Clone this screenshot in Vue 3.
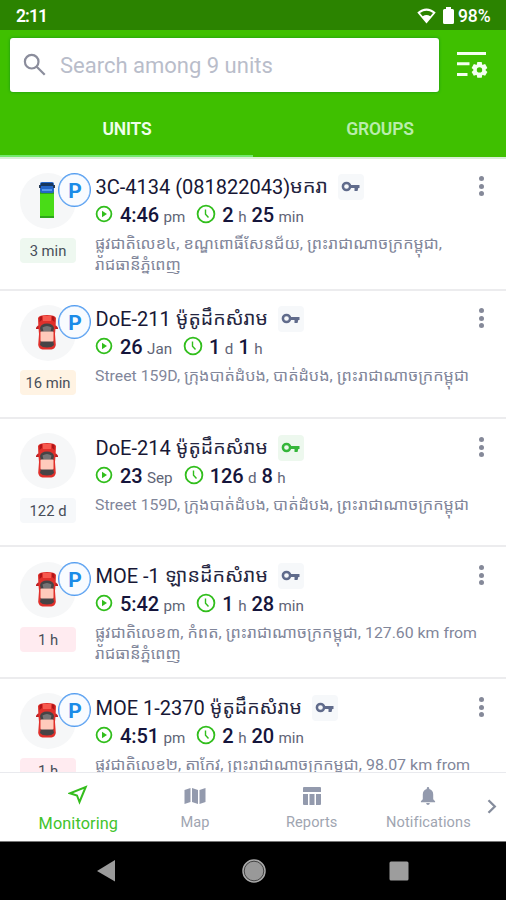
<script setup>
const units = [
  { id: 1, latin: '3C-4134 (081822043)', khmer: 'មករា', kw: 38, key: 'off', parked: true, truck: true, age: '3 min', tone: 'ok', tall: true,
    start: ['4:46', 'pm'], span: [['2', 'h'], ['25', 'min']],
    address: [[['ផ្លូវជាតិលេខ៤, ខណ្ឌពោធិ៍សែនជ័យ, ព្រះរាជាណាចក្រកម្ពុជា,', 347]], [['រាជធានីភ្នំពេញ', 86]]] },
  { id: 2, latin: 'DoE-211 ', khmer: 'ម៉ូតូដឹកសំរាម', kw: 92, key: 'off', parked: true, age: '16 min', tone: 'warn',
    start: ['26', 'Jan'], span: [['1', 'd'], ['1', 'h']],
    address: [[['Street 159D,', 85], ['ក្រុងបាត់ដំបង, បាត់ដំបង, ព្រះរាជាណាចក្រកម្ពុជា', 285]]] },
  { id: 3, latin: 'DoE-214 ', khmer: 'ម៉ូតូដឹកសំរាម', kw: 92, key: 'on', age: '122 d', tone: 'idle',
    start: ['23', 'Sep'], span: [['126', 'd'], ['8', 'h']],
    address: [[['Street 159D,', 85], ['ក្រុងបាត់ដំបង, បាត់ដំបង, ព្រះរាជាណាចក្រកម្ពុជា', 285]]] },
  { id: 4, latin: 'MOE -1 ', khmer: 'ឡានដឹកសំរាម', kw: 103, key: 'off', parked: true, age: '1 h', tone: 'late', tall: true,
    start: ['5:42', 'pm'], span: [['1', 'h'], ['28', 'min']],
    address: [[['ផ្លូវជាតិលេខ៣, កំពត, ព្រះរាជាណាចក្រកម្ពុជា,', 266], ['127.60 km from', 112]], [['រាជធានីភ្នំពេញ', 86]]] },
  { id: 5, latin: 'MOE 1-2370 ', khmer: 'ម៉ូតូដឹកសំរាម', kw: 92, key: 'off', parked: true, age: '1 h', tone: 'late', tall: true,
    start: ['4:51', 'pm'], span: [['2', 'h'], ['20', 'min']],
    address: [[['ផ្លូវជាតិលេខ២, តាកែវ, ព្រះរាជាណាចក្រកម្ពុជា,', 267], ['98.07 km from', 104]], [['រាជធានីភ្នំពេញ', 86]]] },
]
</script>

<template>
  <div class="screen">
    <header class="status">
      <span class="clock">2:11</span>
      <svg class="wifi" width="19" height="16" viewBox="0 0 19 16"><path fill="#fff" fill-rule="evenodd" d="M0.3 4.4Q9.500-3.200 18.700 4.400L9.500 15.600ZM3 5.100L5.700 8.200Q9.500 5.700 13.300 8.200L16 5.100Q9.500.400 3 5.100Z" /></svg>
      <svg class="battery" width="11" height="17" viewBox="0 0 11 17"><path fill="#fff" d="M3 0h5v2h1.500Q11 2 11 3.500v12Q11 17 9.500 17h-8Q0 17 0 15.500v-12Q0 2 1.500 2H3Z" /></svg>
      <span class="percent">98%</span>
    </header>

    <section class="top">
      <div class="tools">
        <div class="search">
          <svg width="24" height="24" viewBox="0 0 24 24" fill="none" stroke="#8b8d9c" stroke-width="2.200"><circle cx="8.700" cy="8.700" r="6.800" /><path d="m13.700 13.700 8 8" /></svg>
          <span>Search among 9 units</span>
        </div>
        <svg class="filter" width="32" height="28" viewBox="0 0 32 28">
          <path d="M1 2.500h29M1 12.700h12.500M1 23.600h10.500" stroke="#f4fff0" stroke-width="3" />
          <g transform="translate(23.500 18.900)" fill="#f4fff0">
            <path v-for="a in 6" :key="a" d="M-2.200-7.800h4.400l.8 3.800h-6z" :transform="`rotate(${a * 60})`" />
            <circle r="4.300" fill="none" stroke="#f4fff0" stroke-width="3.200" />
          </g>
        </svg>
      </div>
      <nav class="tabs">
        <div class="tab active">UNITS</div>
        <div class="tab">GROUPS</div>
      </nav>
    </section>

    <main class="list">
      <article v-for="u in units" :key="u.id" class="unit" :class="{ tall: u.tall }">
        <div class="side">
          <div class="avatar">
            <svg v-if="u.truck" width="16" height="38" viewBox="0 0 16 38">
              <rect x="1" y="10" width="14" height="27" fill="#49dc17" />
              <path d="M1 10h14v3H1zM1 35h14v2H1z" fill="#2da51a" />
              <rect x="1" y="1" width="14" height="11" rx="2" fill="#2466c8" />
              <path d="M2 2h12v3H2z" fill="#17375f" /><path d="M0 4h2v3H0zM14 4h2v3h-2z" fill="#263a55" />
              <path d="M3 8h10v2H3z" fill="#5398ee" />
            </svg>
            <svg v-else width="22" height="37" viewBox="0 0 22 37">
              <path d="M0 13.500 2 11.500h18l2 2v1.500H0Z" fill="#bb1d20" />
              <path d="M2 4Q3 1 11 1t9 3l-.4 9-.6 7 .8 11q-.8 4-4.300 4.500h-9q-3.500-.5-4.300-4.500L3 20l-.6-7Z" fill="#e0302b" />
              <path d="M3.500 3 6 2v4L3.500 8ZM18.500 3 16 2v4l2.500 2Z" fill="#ad1519" />
              <path d="M4 14q1-4.500 7-4.500t7 4.500l-1 5v7l1 5q-2 2.500-7 2.500T4 31l1-5v-7Z" fill="#464446" />
              <path d="M6.500 13.500q4.500-3 9 0l-1 4h-7Z" fill="#777475" />
              <rect x="4.500" y="17.500" width="13" height="10" rx="1" fill="#ffcabb" />
              <path d="M7 2h8v5H7Z" fill="#f7584e" />
            </svg>
          </div>
          <div v-if="u.parked" class="parking">P</div>
          <div class="age" :class="u.tone">{{ u.age }}</div>
        </div>

        <div class="body">
          <div class="title">
            <span class="latin">{{ u.latin }}</span>
            <svg class="run" :width="u.kw" height="28"><text x="0" y="20" :textLength="u.kw" lengthAdjust="spacingAndGlyphs">{{ u.khmer }}</text></svg>
            <span class="key" :class="u.key">
              <svg width="20" height="12" viewBox="0 0 20 12"><circle cx="5.500" cy="5.500" r="3.600" fill="none" stroke="currentColor" stroke-width="2.500" /><path d="M9 4h9.500v3h-1.200L16.500 10h-3V7H9Z" fill="currentColor" /></svg>
            </span>
          </div>
          <div class="times">
            <svg class="play" width="18" height="18" viewBox="0 0 18 18"><circle cx="9" cy="9" r="7.400" fill="none" stroke="#31be1c" stroke-width="1.800" /><path d="m7 5.700 5 3.300-5 3.300Z" fill="#31be1c" /></svg>
            <b>{{ u.start[0] }}</b><small>{{ u.start[1] }}</small>
            <svg class="dur" width="20" height="20" viewBox="0 0 20 20" fill="none" stroke="#31be1c"><circle cx="10" cy="10" r="8.400" stroke-width="1.800" /><path d="M9.500 5.500v4.700l3 3.300" stroke-width="1.400" /></svg>
            <template v-for="(s, i) in u.span" :key="i"><b>{{ s[0] }}</b><small>{{ s[1] }}</small></template>
          </div>
          <div v-for="(line, i) in u.address" :key="i" class="address">
            <svg v-for="(r, j) in line" :key="j" class="run" :width="r[1]" height="21"><text x="0" y="15" :textLength="r[1]" lengthAdjust="spacingAndGlyphs">{{ r[0] }}</text></svg>
          </div>
        </div>
        <div class="more"><i></i><i></i><i></i></div>
      </article>
    </main>

    <nav class="bottom">
      <div class="item on"><svg width="20" height="20" viewBox="0 0 20 20"><path d="M17.700 2 11.500 17 9 10.500 2 8.300Z" fill="none" stroke="#34bd1d" stroke-width="2" /></svg><span>Monitoring</span></div>
      <div class="item"><svg width="22" height="18" viewBox="0 0 22 18"><path d="M.5 3 6.500 1v14l-6 2ZM8 1l6 2v14l-6-2ZM15.500 3l6-2v14l-6 2Z" fill="#939aad" /></svg><span>Map</span></div>
      <div class="item"><svg width="18" height="18" viewBox="0 0 18 18"><path d="M1 0h16q1 0 1 1v4H0V1q0-1 1-1ZM0 7h5v11H1q-1 0-1-1ZM6.500 7h5v11h-5ZM13 7h5v10q0 1-1 1h-4Z" fill="#939aad" /></svg><span>Reports</span></div>
      <div class="item"><svg width="16" height="19" viewBox="0 0 16 19"><path d="M6.700 2.200V1.300a1.300 1.300 0 0 1 2.600 0v.9Q13.500 3.500 13.500 8v5l2 2v1H.5v-1l2-2V8q0-4.500 4.200-5.800ZM6 17h4q-.4 2-2 2t-2-2Z" fill="#939aad" /></svg><span>Notifications</span></div>
      <svg class="next" width="10" height="15" viewBox="0 0 10 15"><path d="m1.500 1.200 6.300 6.300-6.300 6.300" fill="none" stroke="#858c9c" stroke-width="2.300" /></svg>
    </nav>

    <footer class="system">
      <svg width="18" height="22" viewBox="0 0 18 22"><path d="M18 0v21.500L0 11Z" fill="#9b9b9b" /></svg>
      <svg class="home" width="24" height="24" viewBox="0 0 24 24"><circle cx="12" cy="12" r="11" fill="#999" stroke="#aaa" stroke-width="1.500" /><circle cx="12" cy="12" r="9.800" fill="none" stroke="#444" stroke-width="1" /></svg>
      <svg width="20" height="20" viewBox="0 0 20 20"><rect x=".5" y=".5" width="19" height="19" rx="1.500" fill="#9d9d9d" /></svg>
    </footer>
  </div>
</template>

<style>
body { overflow: hidden; }
</style>
<style scoped>
* { box-sizing: border-box; }
.screen { width: 506px; height: 900px; display: flex; flex-direction: column; background: #fff; font-family: Roboto, "Noto Sans", "Noto Sans Khmer", sans-serif; overflow: hidden; }
svg { display: block; flex: none; }
.status { height: 30px; flex: none; background: #2b8300; color: #fff; display: flex; align-items: center; padding: 1px 15px 0 16px; font-size: 17px; font-weight: 500; }
.clock { flex: 1; letter-spacing: -.9px; font-size: 17.500px; font-weight: 600; }
.battery { margin: 0 4px 0 7px; }
.percent { width: 33px; font-size: 17.500px; letter-spacing: -.1px; }
.top { height: 129px; flex: none; background: #3fc000; border-bottom: 2px solid #d9eed6; display: flex; flex-direction: column; }
.tools { display: flex; align-items: center; padding: 8px 18px 0 10px; justify-content: space-between; }
.search { width: 429px; height: 54px; background: #fff; border-radius: 3px; display: flex; align-items: center; padding-left: 13px; gap: 13px; color: #b9bdca; font-size: 22px; box-shadow: 0 0 3px #15901c; }
.tabs { flex: 1; display: flex; }
.tab { flex: 1; display: flex; align-items: center; justify-content: center; font-size: 17.500px; font-weight: 600; letter-spacing: -.2px; color: #b9edac; padding: 9px 0 0 1px; }
.tab.active { color: #efffeb; border-bottom: 2px solid #72e96c; padding-top: 11px; }
.list { flex: 1; min-height: 0; overflow: hidden; }
.unit { height: 128px; display: flex; padding: 14px 0 0 20px; border-bottom: 2px solid #ececee; }
.unit.tall { height: 132px; }
.unit:nth-child(n+3) .body, .unit:nth-child(n+3) .more { position: relative; top: 1px; }
.side { width: 75px; flex: none; position: relative; display: flex; flex-direction: column; gap: 9px; }
.unit:nth-child(4) .side { padding-top: 1px; }
.avatar { width: 56px; height: 56px; border-radius: 50%; background: #f6f7f8; display: flex; align-items: center; justify-content: center; padding: 0 2px 2px 0; }
.parking { position: absolute; left: 38px; top: 0; width: 33px; height: 34px; border-radius: 50%; background: #f8fbff; border: 1px solid #529cf0; box-shadow: inset 0 0 0 .5px #78b4f5; display: flex; align-items: center; justify-content: center; padding: 2px 0 0 1px; color: #1b8be8; font-size: 21px; line-height: 1; font-weight: 700; }
.unit:nth-child(4) .parking { top: 1px; }
.age { width: 56px; height: 25px; border-radius: 4px; display: flex; align-items: center; justify-content: center; font-size: 14.800px; color: #484e59; }
.age.ok { background: #eef8f0; }
.age.warn { background: #fff3e3; }
.age.idle { background: #f6f8fa; }
.age.late { background: #ffebf0; }
.body { flex: 1; min-width: 0; }
.title { height: 28px; display: flex; align-items: center; color: #171735; font-size: 20px; padding-left: .5px; }
.latin { white-space: pre; }
.title text { font-size: 19px; fill: #242540; }
.key { width: 26px; height: 26px; border-radius: 4px; margin-left: 10px; background: #f6f8fa; color: #606b8b; display: flex; align-items: center; justify-content: center; }
.key.on { background: #edf8ee; color: #35b63a; }
.times { height: 28px; display: flex; align-items: baseline; line-height: 28px; color: #15153b; }
.times svg { align-self: center; }
.times b { font-size: 20px; font-weight: 500; letter-spacing: -.1px; }
.times small { font-size: 15.200px; color: #606476; margin: 0 5px 0 4.500px; }
.play { margin: 0 7px 2px 0; }
.dur { margin: 0 6px 2px 6px; }
.address { height: 21px; display: flex; gap: 4px; }
.times + .address { margin-top: 5px; }
.address text { font-size: 15.500px; fill: #81869a; }
.run { overflow: visible; }
.more { width: 49px; display: flex; flex-direction: column; align-items: center; gap: 2.500px; padding-top: 3px; }
.more i { width: 5px; height: 5px; border-radius: 50%; background: #858999; }
.bottom { height: 69px; flex: none; border-top: 1px solid #e9eaee; display: flex; position: relative; padding-left: 20px; background: #fff; }
.item { width: 116.700px; display: flex; flex-direction: column; align-items: center; color: #a0a5b1; font-size: 14.600px; }
.item svg { margin-top: 14px; height: 18px; }
.item span { margin-top: 8px; line-height: 18px; letter-spacing: .1px; }
.item.on { color: #42c32b; font-size: 16.300px; }
.item.on svg { margin-top: 12px; height: 20px; }
.item.on span { margin-top: 10px; }
.next { margin: 26px 0 0 0; }
.system { height: 59px; flex: none; background: #000; border-top: 1px solid #777; display: flex; align-items: center; justify-content: space-between; padding: 0 97px 0 97px; }
.home { margin-left: 3px; }
</style>
